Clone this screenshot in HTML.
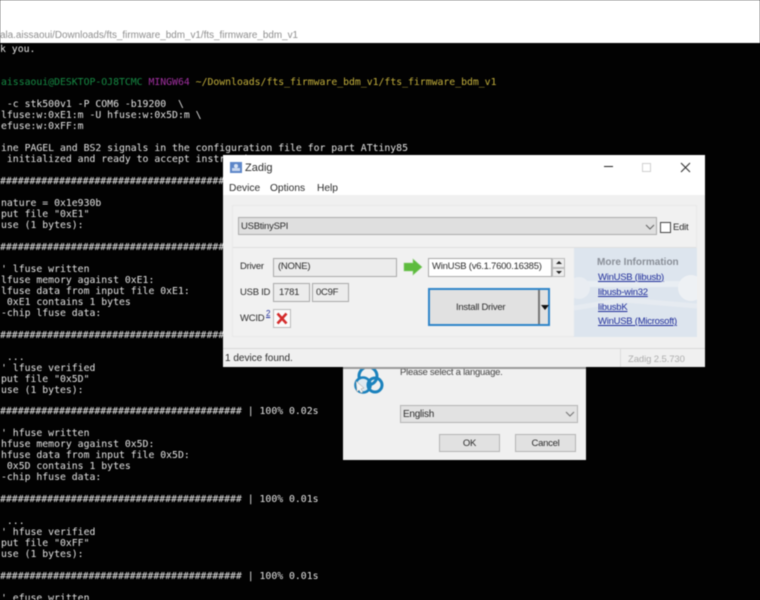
<!DOCTYPE html>
<html><head><meta charset="utf-8"><style>
html,body{margin:0;padding:0;width:760px;height:600px;overflow:hidden;background:#000}
#all{position:absolute;left:0;top:0;width:760px;height:600px;overflow:hidden;filter:blur(.45px)}
#top{position:absolute;left:0;top:0;width:760px;height:43px;background:#fff}
#path{position:absolute;left:0;top:29px;font:9.9px/13px "Liberation Sans",sans-serif;color:#8e8e8e;white-space:pre}
#term{position:absolute;left:0;top:44px;width:760px;height:556px;background:#020202;overflow:hidden}
.l{position:absolute;left:1px;margin-top:1.200px;font:9.8px/11px "DejaVu Sans Mono","Liberation Mono",monospace;color:#e4e4e4;white-space:pre}
.a{position:absolute;font:9.500px/12px "Liberation Sans",sans-serif;letter-spacing:-.25px;color:#2c2c2c;white-space:pre}
.b{position:absolute;box-sizing:border-box}
.lnk{color:#1f2d9a;text-decoration:underline}
</style></head><body><div id="all">
<div id="top"></div>
<div id="path">ala.aissaoui/Downloads/fts_firmware_bdm_v1/fts_firmware_bdm_v1</div>
<div id="term"></div>
<div class="l" style="left:0;top:43px">k you.</div>
<div class="l" style="left:1px;top:76px"><span style="color:#168a44">aissaoui@DESKTOP-OJ8TCMC</span> <span style="color:#a030a0">MINGW64</span> <span style="color:#c4b03c">~/Downloads/fts_firmware_bdm_v1/fts_firmware_bdm_v1</span></div>
<div class="l" style="left:1px;top:98px"> -c stk500v1 -P COM6 -b19200  \</div>
<div class="l" style="top:109px">lfuse:w:0xE1:m -U hfuse:w:0x5D:m \</div>
<div class="l" style="top:120px">efuse:w:0xFF:m</div>
<div class="l" style="top:142px">ine PAGEL and BS2 signals in the configuration file for part ATtiny85</div>
<div class="l" style="top:153px"> initialized and ready to accept instructions</div>
<div class="l" style="left:0;top:175px">#########################################</div>
<div class="l" style="top:197px">nature = 0x1e930b</div>
<div class="l" style="top:208px">put file "0xE1"</div>
<div class="l" style="top:219px">use (1 bytes):</div>
<div class="l" style="left:0;top:241px">#########################################</div>
<div class="l" style="top:263px">' lfuse written</div>
<div class="l" style="top:274px">lfuse memory against 0xE1:</div>
<div class="l" style="top:285px">lfuse data from input file 0xE1:</div>
<div class="l" style="top:296px"> 0xE1 contains 1 bytes</div>
<div class="l" style="top:307px">-chip lfuse data:</div>
<div class="l" style="left:0;top:329px">#########################################</div>
<div class="l" style="top:351px"> ...</div>
<div class="l" style="top:362px">' lfuse verified</div>
<div class="l" style="top:373px">put file "0x5D"</div>
<div class="l" style="top:384px">use (1 bytes):</div>
<div class="l" style="left:0;top:405px">######################################### | 100% 0.02s</div>
<div class="l" style="top:427px">' hfuse written</div>
<div class="l" style="top:438px">hfuse memory against 0x5D:</div>
<div class="l" style="top:449px">hfuse data from input file 0x5D:</div>
<div class="l" style="top:460px"> 0x5D contains 1 bytes</div>
<div class="l" style="top:471px">-chip hfuse data:</div>
<div class="l" style="left:0;top:493px">######################################### | 100% 0.01s</div>
<div class="l" style="top:515px"> ...</div>
<div class="l" style="top:526px">' hfuse verified</div>
<div class="l" style="top:537px">put file "0xFF"</div>
<div class="l" style="top:548px">use (1 bytes):</div>
<div class="l" style="left:0;top:570px">######################################### | 100% 0.01s</div>
<div class="l" style="top:592px">' efuse written</div>

<!-- language dialog -->
<div class="b" style="left:343px;top:360px;width:243px;height:100px;background:#f0f0f0"></div>
<svg class="b" style="left:352px;top:364px" width="36" height="32" viewBox="0 0 36 32"><circle cx="16" cy="12" r="9" fill="none" stroke="#1b82bd" stroke-width="3"/><circle cx="11" cy="21" r="7.500" fill="#dfe9f0" stroke="#1b82bd" stroke-width="2.600"/><circle cx="23" cy="21" r="7" fill="none" stroke="#1b82bd" stroke-width="3"/><path d="M4 17l8 7-3 1 2 3-2 1-2-3-2 2z" fill="#f4f4f4" stroke="#999" stroke-width=".5"/></svg>
<div class="a" style="left:400px;top:367px;color:#444">Please select a language.</div>
<div class="b" style="left:400px;top:405px;width:178px;height:18px;background:#e2e2e2;border:1px solid #b5b5b5"></div>
<div class="a" style="left:403px;top:409px;font-size:10px">English</div>
<svg class="b" style="left:565px;top:411px" width="10" height="6"><path d="M1 1l4 4 4-4" fill="none" stroke="#777" stroke-width="1.100"/></svg>
<div class="b" style="left:439px;top:434px;width:61px;height:18px;background:#e1e1e1;border:1px solid #b5b5b5"></div>
<div class="a" style="left:439px;top:437.500px;width:61px;text-align:center">OK</div>
<div class="b" style="left:515px;top:434px;width:61px;height:18px;background:#e1e1e1;border:1px solid #b5b5b5"></div>
<div class="a" style="left:515px;top:437.500px;width:61px;text-align:center">Cancel</div>

<!-- Zadig window -->
<div class="b" style="left:343px;top:367px;width:243px;height:2px;background:#9a9a9a"></div>
<div class="b" style="left:223px;top:155px;width:482px;height:212px;background:#f0f0f0"></div>
<div class="b" style="left:223px;top:155px;width:482px;height:40px;background:#fff"></div>
<div class="b" style="left:230px;top:162px;width:12px;height:11px;background:#5d86c8"></div>
<div class="b" style="left:234px;top:164px;width:4px;height:4px;background:#d9e4f4;border-radius:2px"></div>
<div class="b" style="left:232px;top:168px;width:8px;height:3px;background:#c7d6ee"></div>
<div class="a" style="left:245px;top:161px;font-size:11px;line-height:14px;letter-spacing:0">Zadig</div>
<div class="a" style="left:229px;top:183px;font-size:10.200px;letter-spacing:0">Device</div>
<div class="a" style="left:270px;top:183px;font-size:10.200px;letter-spacing:0">Options</div>
<div class="a" style="left:317px;top:183px;font-size:10.200px;letter-spacing:0">Help</div>
<div class="b" style="left:604px;top:166px;width:9px;height:1px;background:#222"></div>
<div class="b" style="left:642px;top:163px;width:9px;height:9px;border:1px solid #d0d0d0"></div>
<svg class="b" style="left:680px;top:162px" width="11" height="11"><path d="M1 1l9 9M10 1l-9 9" stroke="#333" stroke-width="1.100"/></svg>

<div class="b" style="left:232px;top:205px;width:465px;height:132px;background:#f1f1f1;border:1px solid #e8e8e8"></div>
<div class="b" style="left:238px;top:217px;width:419px;height:18px;background:#dfdfdf;border:1px solid #acacac"></div>
<div class="a" style="left:241px;top:220.500px">USBtinySPI</div>
<svg class="b" style="left:645px;top:224px" width="10" height="6"><path d="M1 1l4 4 4-4" fill="none" stroke="#666" stroke-width="1.100"/></svg>
<div class="b" style="left:660px;top:222px;width:11px;height:11px;background:#fff;border:1px solid #444"></div>
<div class="a" style="left:673px;top:221.500px">Edit</div>
<div class="b" style="left:233px;top:247px;width:463px;height:1px;background:#dedede"></div>

<div class="b" style="left:574px;top:248px;width:123px;height:89px;background:#dde5ee;overflow:hidden"></div>
<svg class="b" style="left:574px;top:248px" width="123" height="89"><path d="M0 36H123" stroke="#e9eef3" stroke-width="6"/><circle cx="5" cy="40" r="11" fill="#e9edf2"/><circle cx="117" cy="40" r="13" fill="#eef1f4"/><path d="M0 60l50-8 73 6" stroke="#e6ebf1" stroke-width="5" fill="none"/></svg>
<div class="a" style="left:597px;top:257px;font-weight:bold;font-size:10px;letter-spacing:0;color:#8a8f98">More Information</div>
<div class="a lnk" style="left:598px;top:271.500px">WinUSB (libusb)</div>
<div class="a lnk" style="left:598px;top:287px">libusb-win32</div>
<div class="a lnk" style="left:598px;top:302px">libusbK</div>
<div class="a lnk" style="left:598px;top:316px">WinUSB (Microsoft)</div>

<div class="a" style="left:240px;top:261px">Driver</div>
<div class="b" style="left:273px;top:258px;width:124px;height:19px;background:#ececec;border:1px solid #aaa"></div>
<div class="a" style="left:278px;top:261px">(NONE)</div>
<svg class="b" style="left:403px;top:258px" width="20" height="18"><path d="M1 5h9V1l9 8-9 8v-4H1z" fill="#5dbb3d" stroke="#8ed07a" stroke-width=".6"/></svg>
<div class="b" style="left:428px;top:258px;width:124px;height:19px;background:#fff;border:1px solid #aaa"></div>
<div class="a" style="left:432px;top:261px">WinUSB (v6.1.7600.16385)</div>
<div class="b" style="left:552px;top:258px;width:13px;height:9.500px;background:#eee;border:1px solid #bbb"></div>
<div class="b" style="left:552px;top:267.500px;width:13px;height:9.500px;background:#eee;border:1px solid #bbb"></div>
<div class="b" style="left:555.500px;top:261px;border:3px solid transparent;border-top:0;border-bottom:3px solid #222"></div>
<div class="b" style="left:555.500px;top:271px;border:3px solid transparent;border-bottom:0;border-top:3px solid #222"></div>

<div class="a" style="left:240px;top:287px">USB ID</div>
<div class="b" style="left:273px;top:283px;width:37px;height:19px;background:#ececec;border:1px solid #aaa"></div>
<div class="a" style="left:279px;top:286.500px">1781</div>
<div class="b" style="left:312px;top:283px;width:37px;height:19px;background:#ececec;border:1px solid #aaa"></div>
<div class="a" style="left:316px;top:286.500px">0C9F</div>
<div class="a" style="left:240px;top:312.500px">WCID</div>
<div class="a lnk" style="left:266px;top:308px;font-size:8px">2</div>
<div class="b" style="left:273px;top:309px;width:18px;height:19px;background:#fafafa;border:1px solid #bbb"></div>
<svg class="b" style="left:276px;top:312px" width="12" height="13"><path d="M1.500 1.500l9 10M10.500 1.500l-9 10" stroke="#d42c2c" stroke-width="2.600"/></svg>

<div class="b" style="left:428px;top:288px;width:122px;height:38px;background:#e1e1e1;border:2px solid #2f85c9"></div>
<div class="a" style="left:456px;top:302px">Install Driver</div>
<div class="b" style="left:538px;top:290px;width:2px;height:34px;background:#777"></div>
<div class="b" style="left:541px;top:305px;border:4px solid transparent;border-bottom:0;border-top:5px solid #111"></div>

<div class="b" style="left:223px;top:348px;width:482px;height:1px;background:#d8d8d8"></div>
<div class="b" style="left:620px;top:349px;width:1px;height:18px;background:#dcdcdc"></div>
<div class="a" style="left:225px;top:353px;font-size:10px;letter-spacing:0">1 device found.</div>
<div class="a" style="left:628px;top:354px;color:#aeaeae;letter-spacing:-.1px">Zadig 2.5.730</div>
</div></body></html>
